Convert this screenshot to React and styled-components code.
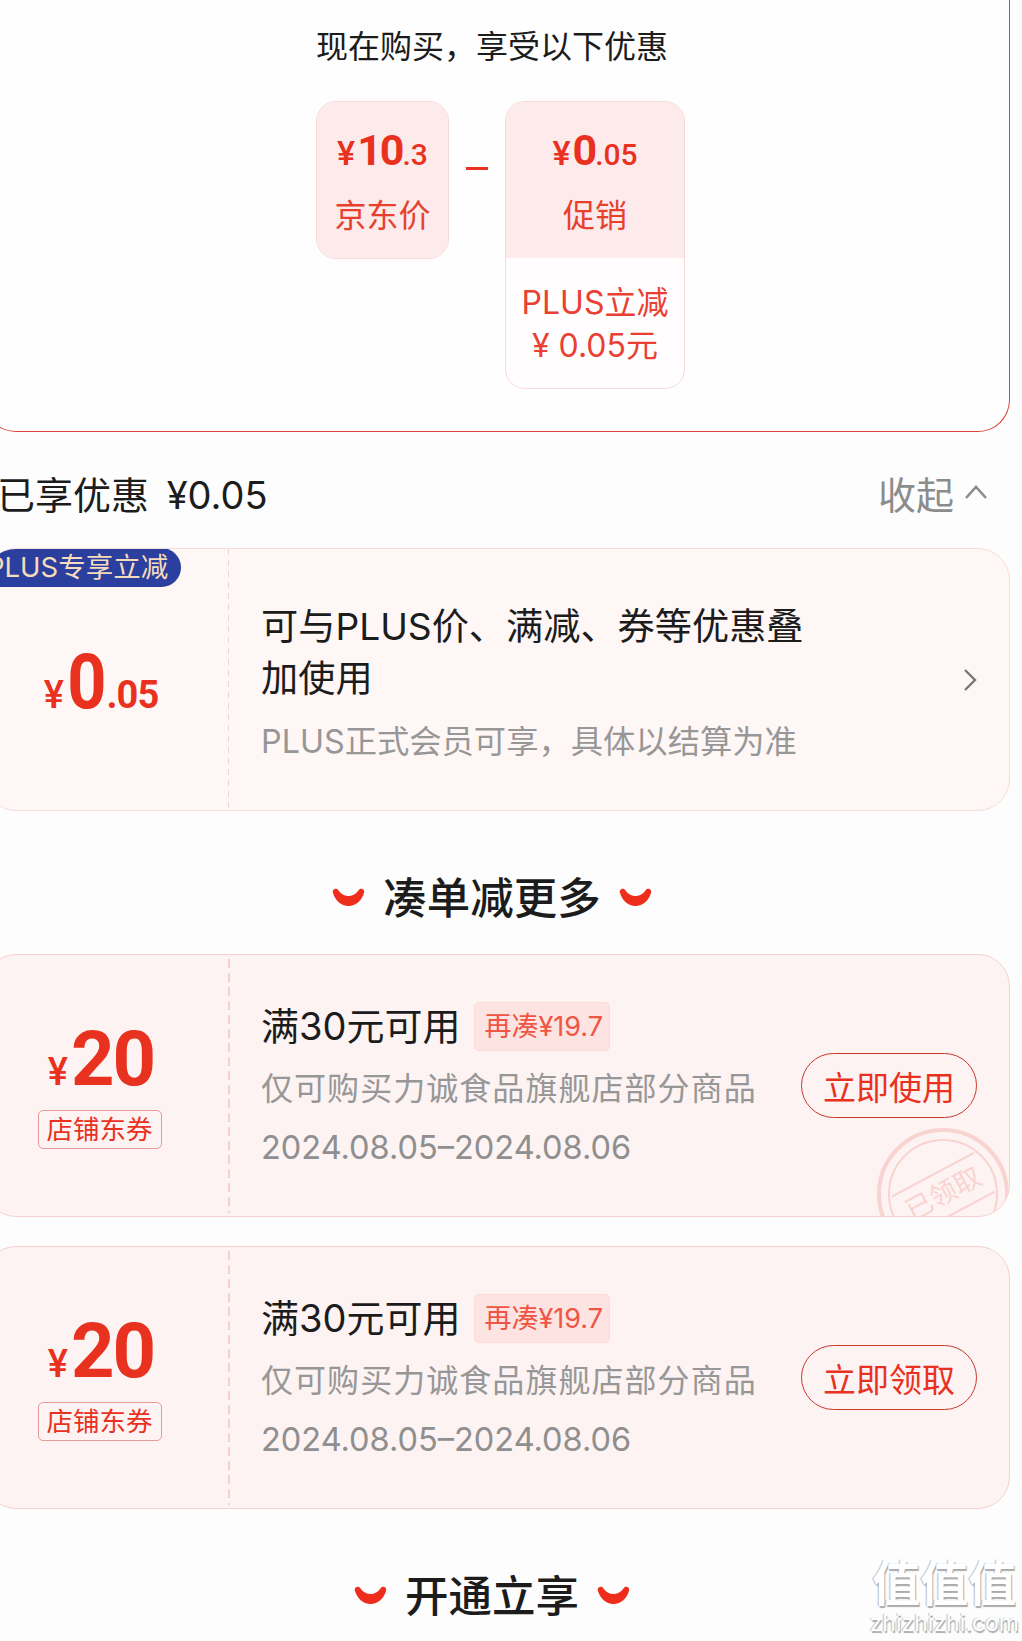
import React from 'react'
import styled, { createGlobalStyle } from 'styled-components'

const RED = '#e8321f'
const COMMA = '\uFF0C'

const coupons = [
  { id: 1, action: '立即使用', claimed: true },
  { id: 2, action: '立即领取', claimed: false },
]

const Smile = () => (
  <SmileIcon viewBox="0 0 33 18">
    <path d="M1 5C0 3 2 0 5 1C7 2 9 8 16.5 8C24 8 26 2 28 1C31 0 33 3 32 5C30 12 24 18 16.5 18C9 18 3 12 1 5Z" />
  </SmileIcon>
)

const App = () => (
  <Page>
    <GlobalStyle />
    <Panel>
      <PanelTitle>现在购买{COMMA}享受以下优惠</PanelTitle>
      <PriceRow>
        <PriceBox>
          <PriceHead>
            <Figure>
              <small>¥</small>
              <big>10</big>
              <small>.3</small>
            </Figure>
            <PriceLabel>京东价</PriceLabel>
          </PriceHead>
        </PriceBox>
        <Minus />
        <PriceBox wide>
          <PriceHead>
            <Figure>
              <small>¥</small>
              <big>0</big>
              <small>.05</small>
            </Figure>
            <PriceLabel>促销</PriceLabel>
          </PriceHead>
          <PriceNote>
            PLUS立减
            <br />¥ 0.05元
          </PriceNote>
        </PriceBox>
      </PriceRow>
    </Panel>

    <SavedRow>
      <SavedTitle>已享优惠 ¥0.05</SavedTitle>
      <Collapse>
        收起
        <svg width="24" height="16" viewBox="0 0 24 16" fill="none" stroke="#8c8c8c" strokeWidth="2.6">
          <path d="M2 14L12 3L22 14" />
        </svg>
      </Collapse>
    </SavedRow>

    <Card plain>
      <PlusBadge>PLUS专享立减</PlusBadge>
      <CardLeft plain>
        <BigPrice>
          <Yen>¥</Yen>
          <Zero>0</Zero>
          <Cents>.05</Cents>
        </BigPrice>
      </CardLeft>
      <CardRight plain>
        <PlusInfo>
          <PlusTitle>可与PLUS价、满减、券等优惠叠加使用</PlusTitle>
          <PlusSub>PLUS正式会员可享{COMMA}具体以结算为准</PlusSub>
        </PlusInfo>
        <svg width="14" height="24" viewBox="0 0 14 24" fill="none" stroke="#777" strokeWidth="2.4">
          <path d="M2 2L12 12L2 22" />
        </svg>
      </CardRight>
    </Card>

    <SectionTitle>
      <Smile />
      凑单减更多
      <Smile />
    </SectionTitle>

    <CouponList>
      {coupons.map(coupon => (
        <Card key={coupon.id}>
          <CardLeft>
            <BigPrice>
              <Yen>¥</Yen>
              <Amount>20</Amount>
            </BigPrice>
            <ShopTag>店铺东券</ShopTag>
          </CardLeft>
          <CardRight>
            <CouponInfo>
              <CouponHead>
                <CouponTitle>满30元可用</CouponTitle>
                <Gap>再凑¥19.7</Gap>
              </CouponHead>
              <CouponDesc>仅可购买力诚食品旗舰店部分商品</CouponDesc>
              <CouponDate>2024.08.05–2024.08.06</CouponDate>
            </CouponInfo>
            <ActionButton>{coupon.action}</ActionButton>
          </CardRight>
          {coupon.claimed && (
            <Stamp>
              <StampText>已领取</StampText>
            </Stamp>
          )}
        </Card>
      ))}
    </CouponList>

    <SectionTitle>
      <Smile />
      开通立享
      <Smile />
    </SectionTitle>

    <Watermark>
      <WatermarkLogo>值值值</WatermarkLogo>
      <WatermarkSite>zhizhizhi.com</WatermarkSite>
    </Watermark>
  </Page>
)

export default App

const GlobalStyle = createGlobalStyle`
  html, body {
    margin: 0;
    padding: 0;
    background: #fdfdfd;
  }
  * {
    box-sizing: border-box;
  }
`

const Page = styled.div`
  position: relative;
  width: 1022px;
  height: 1641px;
  overflow: hidden;
  background: #fdfdfd;
  color: #1c1c1c;
  font-family: Inter, 'Noto Sans CJK SC', sans-serif;
`

const Panel = styled.section`
  width: 1026px;
  margin-left: -16px;
  height: 432px;
  padding: 23px 0 0 332px;
  background: #fefefe;
  border: 1px solid #d9433a;
  border-width: 0 1px 1px 0;
  border-radius: 0 0 32px 32px;
`

const PanelTitle = styled.h2`
  margin: 0;
  font-size: 32px;
  line-height: 48px;
  font-weight: 400;
`

const PriceRow = styled.div`
  display: flex;
  align-items: flex-start;
  margin-top: 30px;
`

const PriceBox = styled.div`
  width: ${props => (props.wide ? '180px' : '133px')};
  border: 1px solid #f7d9d7;
  border-radius: 20px;
  overflow: hidden;
  background: #fffdfd;
`

const PriceHead = styled.div`
  display: flex;
  flex-direction: column;
  align-items: center;
  height: 156px;
  padding-top: 23px;
  background: #fdeaea;
`

const Figure = styled.div`
  display: flex;
  align-items: baseline;
  height: 50px;
  line-height: 50px;
  color: ${RED};
  font-family: Roboto, sans-serif;
  font-weight: 700;

  big {
    font-size: 43px;
    letter-spacing: -2px;
    margin-left: 2px;
  }
  small {
    font-size: 30px;
    font-weight: 500;
  }
  small:first-child {
    font-size: 34px;
  }
`

const PriceLabel = styled.div`
  margin-top: 19px;
  font-size: 32px;
  line-height: 44px;
  color: #e8402f;
`

const PriceNote = styled.div`
  height: 130px;
  padding-top: 23px;
  text-align: center;
  font-size: 32px;
  line-height: 43px;
  color: #ea4033;
`

const Minus = styled.span`
  width: 22px;
  height: 3px;
  margin: 66px 17px 0;
  background: ${RED};
`

const SavedRow = styled.div`
  display: flex;
  align-items: center;
  justify-content: space-between;
  height: 50px;
  margin-top: 35px;
  padding-right: 34px;
`

const SavedTitle = styled.h3`
  margin: 0 0 0 -3px;
  font-size: 38px;
  font-weight: 400;
  word-spacing: 7px;
`

const Collapse = styled.div`
  display: flex;
  align-items: center;
  gap: 10px;
  font-size: 38px;
  color: #8c8c8c;
`

const Card = styled.div`
  position: relative;
  display: flex;
  width: 1026px;
  height: 263px;
  margin-left: -16px;
  margin-top: ${props => (props.plain ? '31px' : '0')};
  overflow: hidden;
  background: ${props => (props.plain ? '#fff7f6' : '#fdf3f3')};
  border: 1px solid ${props => (props.plain ? '#f6dcdc' : '#f6d0d0')};
  border-radius: 32px;
`

const CardLeft = styled.div`
  display: flex;
  flex-direction: column;
  align-items: center;
  justify-content: center;
  flex: 0 0 243px;
  padding-right: 14px;
  padding-top: ${props => (props.plain ? '5px' : '0')};
`

const CardRight = styled.div`
  flex: 1;
  display: flex;
  align-items: center;
  justify-content: space-between;
  padding: 0 32px 0 33px;
  background-image: ${props =>
    props.plain
      ? 'repeating-linear-gradient(to bottom, #efd2d2 0 6px, transparent 6px 11px)'
      : 'repeating-linear-gradient(to bottom, #f6cfcf 0 9px, transparent 9px 14px)'};
  background-repeat: no-repeat;
  background-size: ${props => (props.plain ? '1px 100%' : '2px 254px')};
  background-position: 0 ${props => (props.plain ? '0' : '4px')};
`

const PlusBadge = styled.div`
  position: absolute;
  top: -1px;
  left: -1px;
  height: 39px;
  width: 197px;
  padding-left: 3px;
  border-radius: 0 20px 20px 0;
  background: #2a3f9e;
  color: #f6dcbc;
  font-size: 27.5px;
  line-height: 38px;
  white-space: nowrap;
`

const BigPrice = styled.div`
  display: flex;
  align-items: baseline;
  color: ${RED};
  font-family: Roboto, sans-serif;
  font-weight: 700;
`

const Yen = styled.span`
  font-size: 38px;
  font-weight: 500;
  margin: 0 3px 0 3px;
`

const Zero = styled.span`
  font-size: 76px;
  line-height: 84px;
  transform: scaleX(0.9);
  margin: 0 -2px;
`

const Cents = styled.span`
  font-size: 38px;
  letter-spacing: -1px;
`

const Amount = styled.span`
  font-size: 76px;
  line-height: 72px;
  letter-spacing: -2px;
`

const ShopTag = styled.div`
  width: 124px;
  height: 39px;
  margin-top: 15px;
  border: 1px solid #e59a93;
  border-radius: 5px;
  text-align: center;
  font-size: 26.5px;
  line-height: 37px;
  color: ${RED};
`

const PlusInfo = styled.div`
  width: 552px;
  padding-top: 5px;
`

const PlusTitle = styled.div`
  font-size: 37.2px;
  line-height: 52px;
`

const PlusSub = styled.div`
  margin-top: 15px;
  font-size: 32.3px;
  line-height: 44px;
  color: #979797;
`

const CouponList = styled.div`
  display: flex;
  flex-direction: column;
  gap: 29px;
  margin-top: 26px;
`

const CouponInfo = styled.div`
  display: flex;
  flex-direction: column;
`

const CouponHead = styled.div`
  display: flex;
  align-items: center;
  gap: 14px;
`

const CouponTitle = styled.div`
  font-size: 38px;
  line-height: 50px;
`

const Gap = styled.div`
  height: 49px;
  padding: 0 6px 0 9px;
  border-radius: 5px;
  background: #fde3e1;
  border: 1px solid #fbdad7;
  font-size: 27px;
  line-height: 47px;
  color: #ee5544;
  white-space: nowrap;
`

const CouponDesc = styled.div`
  margin-top: 16px;
  font-size: 32px;
  line-height: 44px;
  letter-spacing: 1.05px;
  color: #979797;
`

const CouponDate = styled.div`
  margin-top: 15px;
  font-size: 32.5px;
  line-height: 44px;
  color: #8f8f8f;
  white-space: nowrap;
`

const ActionButton = styled.button`
  flex: 0 0 176px;
  height: 65px;
  margin-top: 0;
  padding: 0;
  border: 1px solid #c9392a;
  border-radius: 33px;
  background: transparent;
  font-family: inherit;
  font-size: 33px;
  color: ${RED};
`

const Stamp = styled.div`
  position: absolute;
  right: 0;
  bottom: -44px;
  display: flex;
  align-items: center;
  justify-content: center;
  width: 132px;
  height: 132px;
  border: 4px solid #f9d3d0;
  border-radius: 50%;

  &::before {
    content: '';
    position: absolute;
    inset: 7px;
    border: 2px solid #f9d3d0;
    border-radius: 50%;
  }
`

const StampText = styled.span`
  padding: 4px 6px;
  border: 1px solid #f9d3d0;
  border-width: 2px 0;
  transform: rotate(-28deg);
  font-size: 27px;
  line-height: 34px;
  color: #f9d3d0;
  white-space: nowrap;
`

const SectionTitle = styled.h2`
  display: flex;
  align-items: center;
  justify-content: center;
  gap: 18px;
  height: 60px;
  margin: 57px 0 0;
  padding-right: 38px;
  font-size: 43.5px;
  font-weight: 500;
  line-height: 60px;
`

const SmileIcon = styled.svg`
  width: 33px;
  height: 18px;
  margin-top: -2px;
  fill: #ee2d1c;
`

const Watermark = styled.div`
  position: absolute;
  right: 3px;
  bottom: 6px;
  display: flex;
  flex-direction: column;
  align-items: center;
  color: #fff;
  text-shadow: 1px 2px 1px #aaa, -1px 0 1px #bbb;
`

const WatermarkLogo = styled.div`
  font-size: 48px;
  font-weight: 700;
  line-height: 54px;
`

const WatermarkSite = styled.div`
  font-size: 23px;
  line-height: 24px;
`
